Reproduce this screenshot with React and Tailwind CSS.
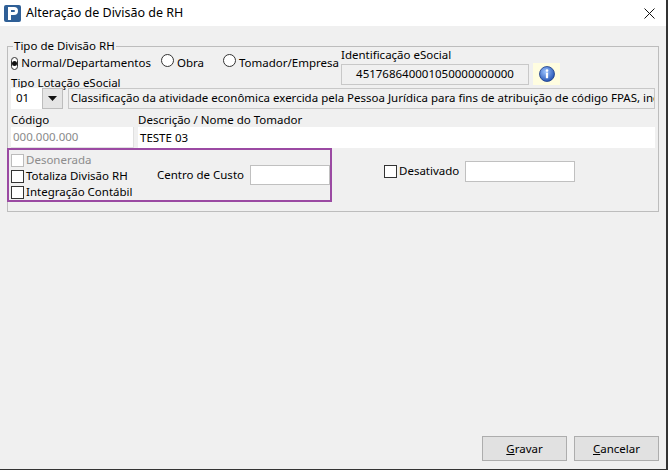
export default function App() {
  const Check = ({ disabled }) => (
    <span className={`inline-block w-[13px] h-[13px] border bg-white ${disabled ? "border-[#bcbcbc]" : "border-[#333]"}`} />
  );
  const Radio = ({ on }) => (
    <span className="inline-flex items-center justify-center w-[13px] h-[13px] rounded-full border border-[#333] bg-white">
      {on && <span className="w-[5px] h-[5px] rounded-full bg-[#111]" />}
    </span>
  );
  return (
    <div className="w-[670px] h-[470px] bg-white font-['Liberation_Sans'] text-[11.5px] text-black overflow-hidden">
      <div className="w-[668px] h-[470px] border-r-2 border-b border-[#333] flex flex-col">
        {/* TITLE */}
        <div className="h-[26px] flex items-center bg-white">
          <div className="ml-[4px] w-[17px] h-[17px] bg-[#2f5f96] rounded-[2px] flex items-center justify-center">
            <svg width="11" height="13" viewBox="0 0 11 13"><path d="M1 0h6a4 4 0 0 1 0 8H4v5H1z M4 3v2h3a1 1 0 0 0 0-2z" fill="white" fillRule="evenodd" /></svg>
          </div>
          <span className="ml-[5px] text-[12.5px]">Alteração de Divisão de RH</span>
          <svg className="ml-auto mr-[11px]" width="11" height="11" viewBox="0 0 11 11"><path d="M0.5 0.5l10 10M10.5 0.5l-10 10" stroke="#111" strokeWidth="1" /></svg>
        </div>
        {/* BODY */}
        <div className="flex-1 bg-[#f0f0f0] flex flex-col px-[7px] pt-[14px]">
          <fieldset className="border border-[#bdbdbd] h-[172px] px-[3px] pt-0 pb-0 m-0 min-w-0">
            <legend className="ml-[2px] px-[1px] leading-[12px]">Tipo de Divisão RH</legend>
            <div className="flex">
              <div className="w-[328px]">
                <div className="flex items-center h-[16px] mt-[3px] whitespace-nowrap">
                  <Radio on /><span className="ml-[3px]">Normal/Departamentos</span>
                  <span className="ml-[10px]"><Radio /></span><span className="ml-[3px]">Obra</span>
                  <span className="ml-[19px]"><Radio /></span><span className="ml-[3px]">Tomador/Empresa</span>
                </div>
                <div className="mt-[5px] leading-[14px]">Tipo Lotação eSocial</div>
              </div>
              <div className="ml-[2px] mt-[-4px]">
                <div className="leading-[14px]">Identificação eSocial</div>
                <div className="flex items-center mt-[1px]">
                  <div className="w-[188px] h-[21px] border border-[#c8c8c8] bg-[#f0f0f0] flex items-center justify-center">451768640001050000000000</div>
                  <div className="ml-[4px] w-[27px] h-[22px] bg-[#fffde0] flex items-center justify-center">
                    <svg width="16" height="16" viewBox="0 0 16 16">
                      <defs><radialGradient id="g" cx="0.4" cy="0.35" r="0.7"><stop offset="0" stopColor="#9cc4ff" /><stop offset="1" stopColor="#1f4fb0" /></radialGradient></defs>
                      <circle cx="8" cy="8" r="7.5" fill="url(#g)" stroke="#1a3c87" strokeWidth="0.8" />
                      <circle cx="8" cy="4.6" r="1.3" fill="white" />
                      <rect x="6.9" y="6.6" width="2.2" height="5.6" fill="white" />
                    </svg>
                  </div>
                </div>
              </div>
            </div>
            <div className="flex items-center mt-[-3px] h-[22px]">
              <div className="w-[31px] h-[21px] bg-white flex items-center pl-[5px]">01</div>
              <div className="w-[21px] h-[21px] bg-[#e5e5e5] border border-[#bdbdbd] flex items-center justify-center">
                <svg width="9" height="5" viewBox="0 0 9 5"><path d="M0 0h9L4.5 5z" fill="#111" /></svg>
              </div>
              <div className="ml-[5px] w-[589px] h-[21px] border border-[#c8c8c8] flex items-center pl-[2px] whitespace-nowrap overflow-hidden">Classificação da atividade econômica exercida pela Pessoa Jurídica para fins de atribuição de código FPAS, inclusive obras</div>
            </div>
            <div className="flex mt-[4px]">
              <div className="w-[128px]">
                <div className="leading-[14px]">Código</div>
                <div className="w-[123px] h-[21px] bg-white border-b border-r border-[#e0e0e0] flex items-center pl-[2px] text-[#8a8a8a]">000.000.000</div>
              </div>
              <div>
                <div className="leading-[14px]">Descrição / Nome do Tomador</div>
                <div className="w-[517px] h-[21px] bg-white flex items-center pl-[2px]">TESTE 03</div>
              </div>
            </div>
            <div className="flex">
              <div className="ml-[-4px] w-[325px] h-[54px] border-2 border-[#9b4aa3] flex pl-[2px] pt-[3px] whitespace-nowrap">
                <div className="flex flex-col gap-[2px] w-[146px]">
                  <div className="flex items-center gap-[2px] text-[#8c8c8c] h-[14px]"><Check disabled />Desonerada</div>
                  <div className="flex items-center gap-[2px] h-[14px]"><Check />Totaliza Divisão RH</div>
                  <div className="flex items-center gap-[2px] h-[14px]"><Check />Integração Contábil</div>
                </div>
                <div className="flex items-center h-[20px] mt-[12px]">
                  <span>Centro de Custo</span>
                  <div className="ml-[6px] w-[80px] h-[20px] bg-white border border-[#c0c0c0]" />
                </div>
              </div>
              <div className="ml-[52px] flex items-center h-[22px] mt-[12px]">
                <Check /><span className="ml-[2px]">Desativado</span>
                <div className="ml-[6px] w-[110px] h-[21px] bg-white border border-[#c0c0c0]" />
              </div>
            </div>
          </fieldset>
          <div className="mt-auto mb-[8px] flex justify-end gap-[7px]">
            <button className="w-[85px] h-[25px] bg-[#e1e1e1] border border-[#adadad]"><span className="underline">G</span>ravar</button>
            <button className="w-[85px] h-[25px] bg-[#e1e1e1] border border-[#adadad]"><span className="underline">C</span>ancelar</button>
          </div>
        </div>
      </div>
    </div>
  );
}
